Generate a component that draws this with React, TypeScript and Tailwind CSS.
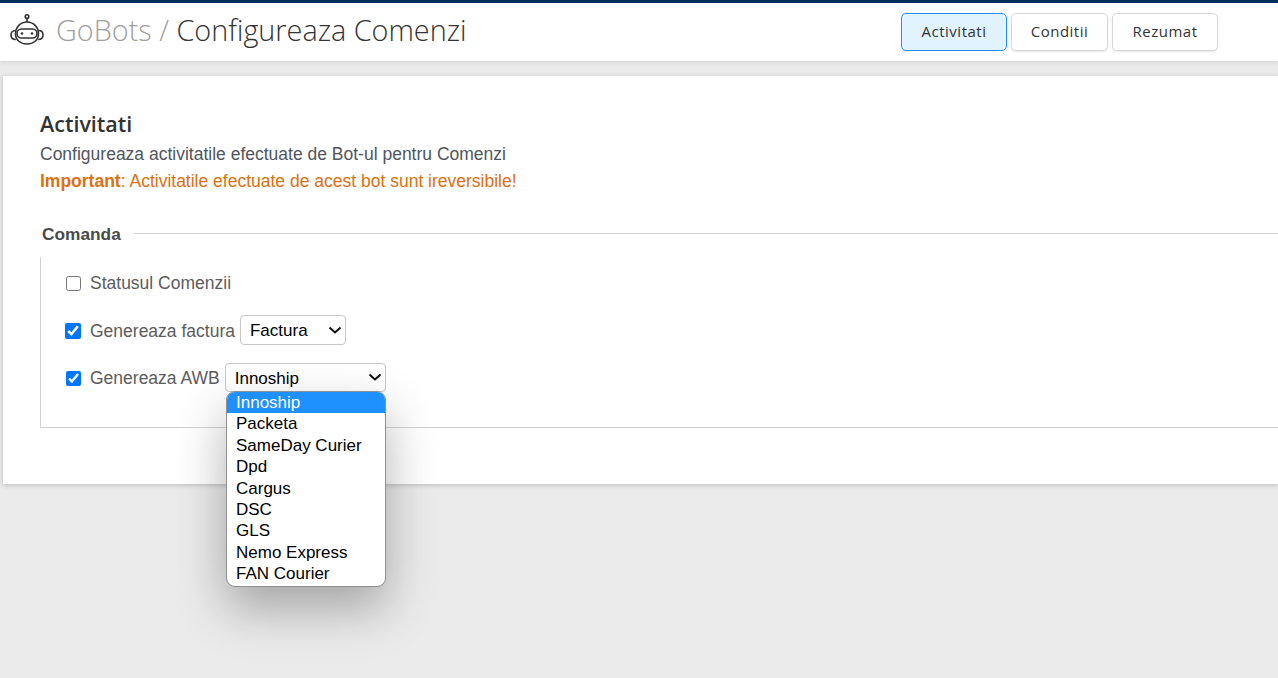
const carriers = ["Innoship", "Packeta", "SameDay Curier", "Dpd", "Cargus", "DSC", "GLS", "Nemo Express", "FAN Courier"];

function BotIcon() {
  return (
    <svg width="36" height="36" viewBox="0 0 36 36" fill="none" stroke="#333" strokeWidth="1.6" className="mb-[4px] ml-[-1px] shrink-0">
      <circle cx="18" cy="4.500" r="1.800" />
      <path d="M18 6.500v3.500" />
      <path d="M6.500 22c0-7 5-12 11.500-12s11.500 5 11.500 12c0 6-5 10-11.500 10S6.500 28 6.500 22z" />
      <rect x="8" y="17" width="20" height="9" rx="4.500" />
      <path d="M6.500 18.500C3.500 18.500 2 20.500 2 23s1.500 4.500 4.800 4.500" />
      <path d="M29.500 18.500c3 0 4.500 2 4.500 4.500s-1.500 4.500-4.800 4.500" />
      <circle cx="13" cy="21.500" r="1.300" fill="#333" stroke="none" />
      <circle cx="23" cy="21.500" r="1.300" fill="#333" stroke="none" />
    </svg>
  );
}

function Select({ value, width, height }: { value: string; width: string; height: string }) {
  return (
    <div className={`relative ml-[5px] ${width}`}>
      <select className={`w-full appearance-none rounded-[4px] border border-[#c8c8c8] bg-white pt-[2px] pl-[9px] text-[17px] text-black ${height}`}>
        <option>{value}</option>
      </select>
      <svg width="14" height="8" viewBox="0 0 14 8" fill="none" stroke="#111" strokeWidth="2" className="pointer-events-none absolute top-1/2 right-[4px] -translate-y-1/2">
        <path d="M1.500 1.500 7 6.500l5.500-5" />
      </svg>
    </div>
  );
}

export default function App() {
  return (
    <div className="h-[678px] overflow-hidden bg-[#ebebeb] font-['Liberation_Sans',sans-serif]">
      <header className="flex h-[61px] items-center border-t-[3px] border-[#002f5f] bg-white pl-[10px] shadow-[0_1px_5px_rgba(0,0,0,0.12)]">
        <BotIcon />
        <h1 className="mb-[4px] ml-[11px] w-[410px] font-['Open_Sans',sans-serif] text-[28.8px] font-light whitespace-nowrap text-[#333]">
          <span className="text-[#a0a0a0]">GoBots / </span>Configureaza Comenzi
        </h1>
        <div className="ml-[435px] flex gap-[4px] font-['Open_Sans',sans-serif] text-[15px] tracking-[0.5px] text-[#333]">
          <button className="h-[38px] w-[106px] rounded-[5px] border border-[#1e90ff] bg-[#e0f3ff] pb-[2px]">Activitati</button>
          <button className="h-[38px] w-[97px] rounded-[5px] border border-[#d8d8d8] bg-white pb-[2px] shadow-[0_1px_2px_rgba(0,0,0,0.1)]">Conditii</button>
          <button className="h-[38px] w-[106px] rounded-[5px] border border-[#d8d8d8] bg-white pb-[2px] shadow-[0_1px_2px_rgba(0,0,0,0.1)]">Rezumat</button>
        </div>
      </header>

      <main className="mt-[15px] ml-[3px] h-[408px] bg-white pt-[34px] pl-[37px] shadow-[0_1px_5px_rgba(0,0,0,0.2)]">
        <h2 className="font-['Open_Sans',sans-serif] text-[21.5px] leading-[27px] font-[550] text-[#333]">Activitati</h2>
        <p className="mt-[5px] text-[17.5px] leading-[24px] text-[#51565e]">Configureaza activitatile efectuate de Bot-ul pentru Comenzi</p>
        <p className="mt-[3px] text-[17.5px] leading-[24px] text-[#de7011]">
          <b>Important</b>: Activitatile efectuate de acest bot sunt ireversibile!
        </p>

        <div className="mt-[31px] flex items-center">
          <span className="ml-[2px] text-[17.3px] leading-[20px] font-bold text-[#4a4a4a]">Comanda</span>
          <div className="mb-[2px] ml-[13px] h-px flex-1 bg-[#d2d2d2]" />
        </div>

        <div className="mt-[13px] h-[171px] border-b border-l border-[#d2d2d2] pl-[25px]">
          <label className="flex h-[52px] items-center text-[17.5px] text-[#5c5c5c]">
            <input type="checkbox" className="h-[15px] w-[15px] accent-[#0075ff]" />
            <span className="ml-[9px]">Statusul Comenzii</span>
          </label>
          <label className="mt-[-3px] ml-[-1px] flex h-[48px] items-center text-[17.5px] text-[#5c5c5c]">
            <input type="checkbox" defaultChecked className="mt-[2px] h-[16px] w-[16px] accent-[#0075ff]" />
            <span className="mt-[2px] ml-[9px]">Genereaza factura</span>
            <Select value="Factura" width="w-[106px]" height="h-[30px]" />
          </label>
          <div className="relative flex h-[46px] items-center text-[17.5px] text-[#5c5c5c]">
            <input type="checkbox" defaultChecked className="mt-[2px] h-[15px] w-[15px] accent-[#0075ff]" />
            <span className="mt-[2px] ml-[9px]">Genereaza AWB</span>
            <Select value="Innoship" width="w-[161px]" height="h-[29px]" />
            {/* open dropdown list */}
            <ul className="absolute top-[37px] left-[160px] z-10 w-[160px] overflow-hidden rounded-[9px] border border-[#8f8f8f] bg-white pb-[1px] text-[17px] leading-[21.4px] text-black shadow-[0_22px_50px_rgba(0,0,0,0.3)]">
              {carriers.map((c, i) => (
                <li key={c} className={i === 0 ? "bg-[#1e90ff] pl-[9px] text-white" : "pl-[9px]"}>{c}</li>
              ))}
            </ul>
          </div>
        </div>
      </main>
    </div>
  );
}
